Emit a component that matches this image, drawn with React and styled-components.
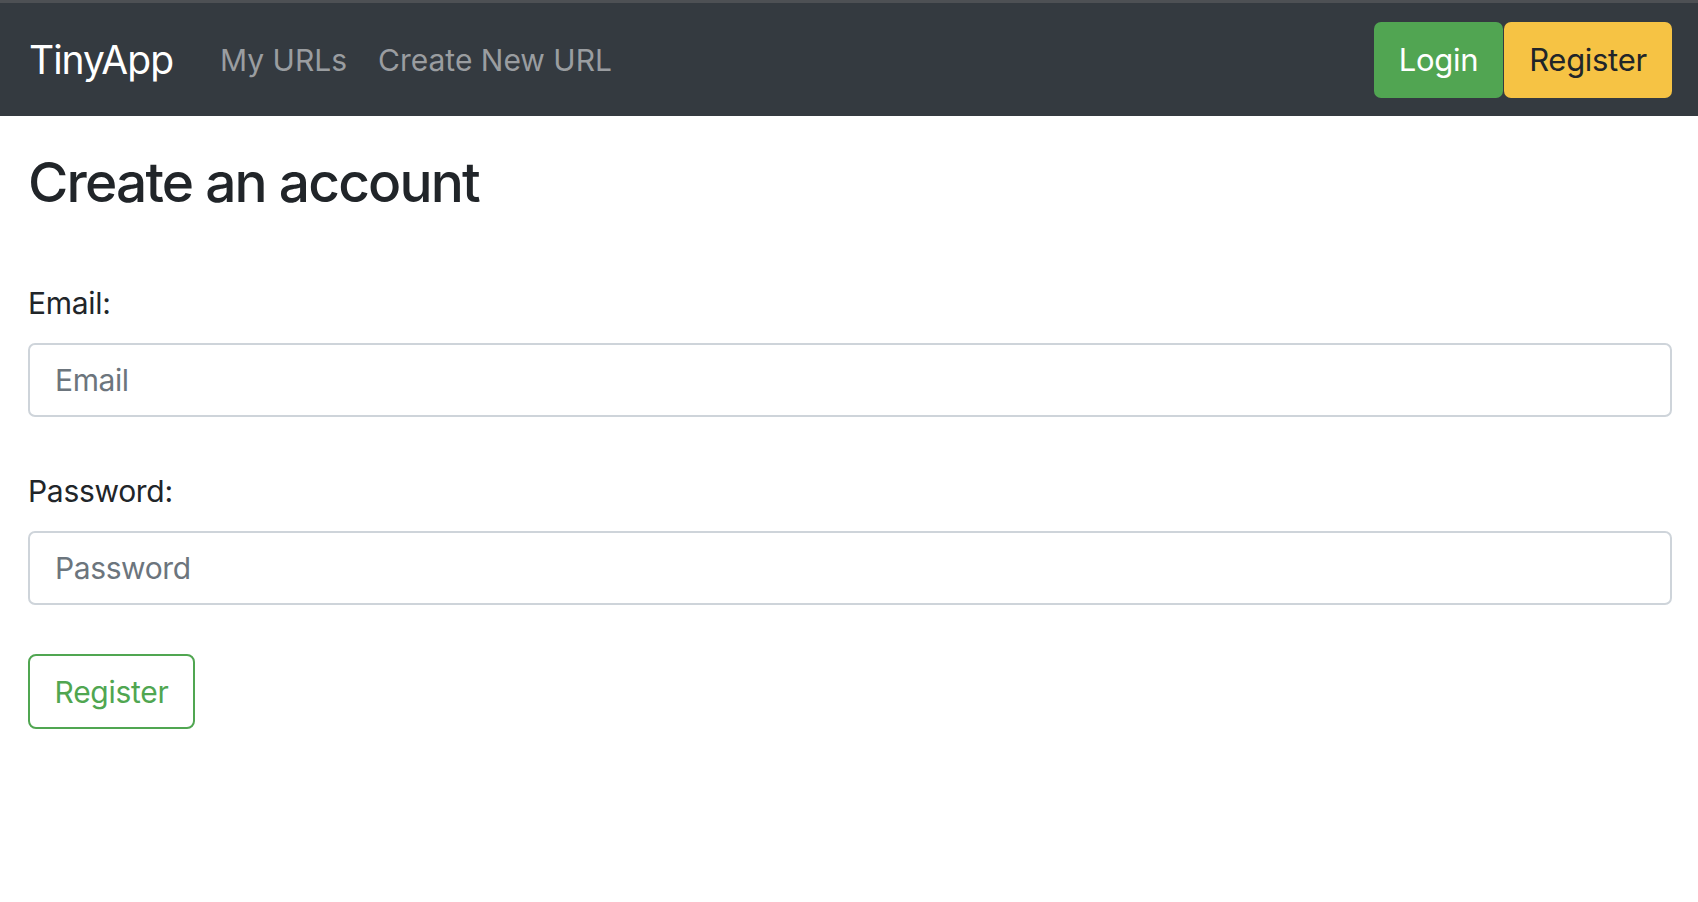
import React from "react";
import styled, { createGlobalStyle } from "styled-components";

const GlobalStyle = createGlobalStyle`
  body {
    margin: 0;
    background: #fff;
    color: #212529;
    font-family: Inter, "Noto Sans", sans-serif;
  }
`;

const Navbar = styled.nav`
  display: flex;
  align-items: center;
  height: 113px;
  border-top: 3px solid #4d5054;
  background: #343a40;
  padding: 0 26px 0 29px;
`;

const Brand = styled.a`
  color: #fff;
  font-size: 39px;
  letter-spacing: -1px;
  text-decoration: none;
  margin-right: 47px;
`;

const NavLinks = styled.div`
  display: flex;
  gap: 31px;
`;

const NavLink = styled.a`
  color: #9a9da0;
  font-size: 30px;
  text-decoration: none;
`;

const NavActions = styled.div`
  display: flex;
  gap: 1px;
  margin-left: auto;
`;

const NavButton = styled.button`
  width: ${(props) => props.w}px;
  height: 76px;
  padding: 0;
  border: none;
  border-radius: 7px;
  background: ${(props) => props.bg};
  color: ${(props) => props.fg};
  font-family: inherit;
  font-size: 31px;
  letter-spacing: -0.3px;
`;

const Main = styled.main`
  padding: 0 26px 0 28px;
`;

const Heading = styled.h1`
  margin: 31px 0 68px;
  font-size: 55px;
  font-weight: 500;
  line-height: 70px;
  letter-spacing: -1.8px;
`;

const Field = styled.div`
  display: flex;
  flex-direction: column;
  margin-bottom: ${(props) => props.gap}px;
`;

const Label = styled.label`
  font-size: 30px;
  line-height: 36px;
  letter-spacing: -0.3px;
  margin-bottom: 22px;
`;

const Input = styled.input`
  box-sizing: border-box;
  height: 74px;
  padding: 0 25px;
  border: 2px solid #ced4da;
  border-radius: 7px;
  font-family: inherit;
  font-size: 30px;
  letter-spacing: -0.4px;
  color: #495057;

  &::placeholder {
    color: #6c757d;
  }
`;

const SubmitButton = styled.button`
  box-sizing: border-box;
  width: 167px;
  height: 75px;
  padding: 0;
  border: 2px solid #50a651;
  border-radius: 8px;
  background: #fff;
  color: #50a651;
  font-family: inherit;
  font-size: 30px;
  letter-spacing: -0.3px;
`;

export default function App() {
  return (
    <>
      <GlobalStyle />
      <Navbar>
        <Brand href="#">TinyApp</Brand>
        <NavLinks>
          <NavLink href="#">My URLs</NavLink>
          <NavLink href="#">Create New URL</NavLink>
        </NavLinks>
        <NavActions>
          <NavButton w={129} bg="#51a552" fg="#fff">Login</NavButton>
          <NavButton w={168} bg="#f6c344" fg="#212529">Register</NavButton>
        </NavActions>
      </Navbar>
      <Main>
        <Heading>Create an account</Heading>
        <form>
          <Field gap={56}>
            <Label htmlFor="email">Email:</Label>
            <Input id="email" type="email" placeholder="Email" />
          </Field>
          <Field gap={49}>
            <Label htmlFor="password">Password:</Label>
            <Input id="password" type="password" placeholder="Password" />
          </Field>
          <SubmitButton type="submit">Register</SubmitButton>
        </form>
      </Main>
    </>
  );
}
